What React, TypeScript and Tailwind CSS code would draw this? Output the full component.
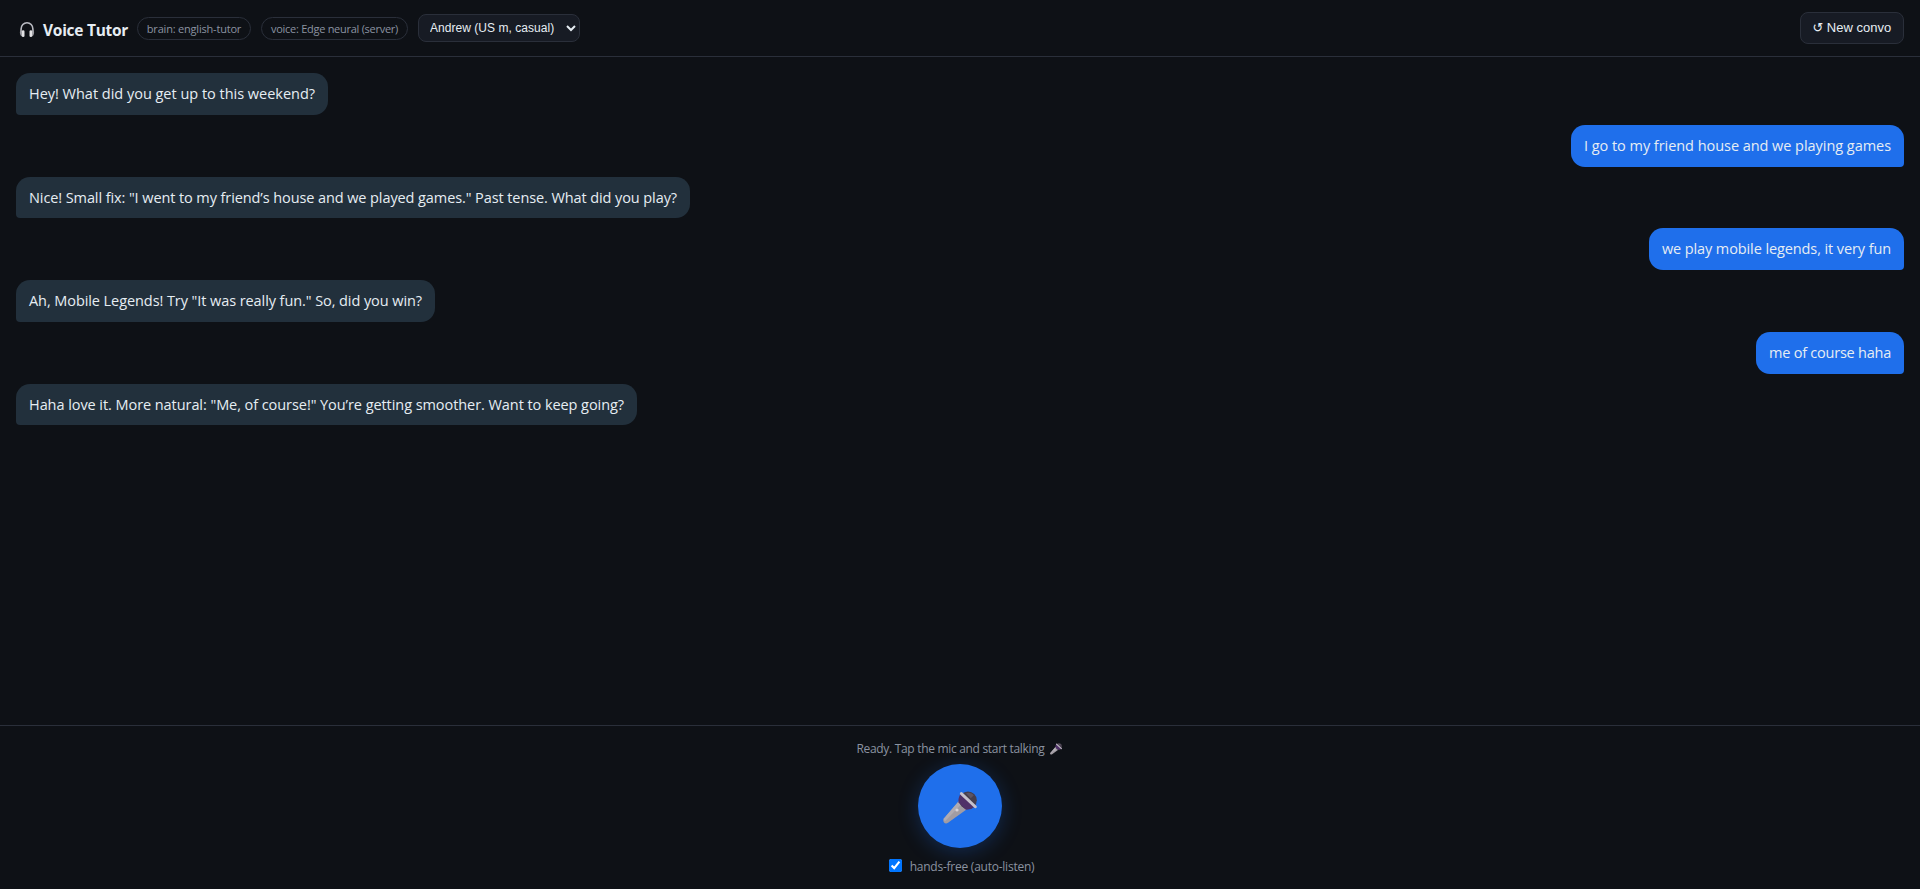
import { useState } from 'react';

interface Message {
  from: 'bot' | 'user';
  text: string;
  tracking: string;
}

const messages: Message[] = [
  { from: 'bot', text: 'Hey! What did you get up to this weekend?', tracking: 'tracking-[-0.015px]' },
  { from: 'user', text: 'I go to my friend house and we playing games', tracking: 'tracking-[-0.045px]' },
  {
    from: 'bot',
    text: 'Nice! Small fix: "I went to my friend’s house and we played games." Past tense. What did you play?',
    tracking: 'tracking-[-0.092px]',
  },
  { from: 'user', text: 'we play mobile legends, it very fun', tracking: 'tracking-[-0.1px]' },
  {
    from: 'bot',
    text: 'Ah, Mobile Legends! Try "It was really fun." So, did you win?',
    tracking: 'tracking-[-0.077px]',
  },
  { from: 'user', text: 'me of course haha', tracking: 'tracking-[-0.23px]' },
  {
    from: 'bot',
    text: 'Haha love it. More natural: "Me, of course!" You’re getting smoother. Want to keep going?',
    tracking: 'tracking-[-0.065px]',
  },
];

function HeadphonesIcon() {
  return (
    <svg viewBox="0 0 16 17" className="h-[17px] w-4 shrink-0" fill="none">
      <path d="M2.1 11V8a5.9 6.3 0 0 1 11.8 0v3" stroke="#b9bbc2" strokeWidth="1.6" />
      <path d="M2.1 8.5C1 9.3.7 11 1 12.6c.3 1.6 1 2.5 1.9 2.9V9z" fill="#9a9ba1" />
      <path d="M13.9 8.5c1.1.8 1.4 2.5 1.1 4.1-.3 1.6-1 2.5-1.9 2.9V9z" fill="#9a9ba1" />
      <rect x="2.8" y="9.2" width="2.7" height="6.8" rx="1.3" fill="#e2e2e4" />
      <rect x="10.5" y="9.2" width="2.7" height="6.8" rx="1.3" fill="#e2e2e4" />
    </svg>
  );
}

function MicIcon({ className }: { className: string }) {
  return (
    <svg viewBox="0 0 34 33" className={className}>
      {/* handle */}
      <path d="M15.5 10.5 23.5 18.5 5 31.8Q2.6 33.2 1 31.4-.3 29.6.9 27.6z" fill="#a19ca3" />
      <path d="M15.5 10.5 18.3 13.3 2 30.2.6 28.4.9 27.6z" fill="#b0abb2" />
      <circle cx="14" cy="19" r="1.6" fill="#d6d2d8" />
      {/* head */}
      <circle cx="25" cy="9.2" r="8.8" fill="#463e4d" />
      <path d="M23 2.2c3-1.3 6.2-.2 7.7 2.2l-3 2.8z" fill="#5c5463" />
      {/* collar */}
      <path d="M17.6 3 31.4 16 Q28 19 22.500 18.600L15.500 11.500Q15 6.500 17.600 3z" fill="#4f3068" />
      <path d="M18.4 2.600 32.300 15.700" stroke="#c6c1cc" strokeWidth="2.900" strokeLinecap="round" />
    </svg>
  );
}

function Bubble({ message }: { message: Message }) {
  const isUser = message.from === 'user';
  return (
    <div
      className={`max-w-[80%] whitespace-nowrap rounded-[14px] px-[13px] py-[10px] text-[14.5px] leading-[21.75px] ${message.tracking} ${
        isUser
          ? 'self-end rounded-br-[4px] bg-[#1f6feb] text-[#e6edf3]'
          : 'self-start rounded-bl-[4px] bg-[#22303c] text-[#e6edf3]'
      }`}
    >
      {message.text}
    </div>
  );
}

export default function App() {
  const [voice, setVoice] = useState('andrew');
  const [handsFree, setHandsFree] = useState(true);

  return (
    <div className="flex h-screen flex-col overflow-hidden bg-[#0e1116] font-['Open_Sans','Noto_Sans',sans-serif] text-[#e6edf3]">
      <header className="flex h-[57px] shrink-0 items-center gap-[10px] border-b border-[#2a2f3a] px-4">
        <h1 className="flex w-[111px] items-center gap-2 whitespace-nowrap pl-[3px] pt-[3px] text-[15.5px] font-bold leading-6 tracking-[-0.27px]">
          <HeadphonesIcon />
          Voice Tutor
        </h1>
        <span className="mt-px flex h-[23px] w-[114px] items-center justify-center whitespace-nowrap rounded-full border border-[#2a2f3a] pt-px text-[11px] tracking-[-0.2px] text-[#8b93a1]">
          brain: english-tutor
        </span>
        <span className="mt-px flex h-[23px] w-[147px] items-center justify-center whitespace-nowrap rounded-full border border-[#2a2f3a] pt-px text-[11px] tracking-[-0.27px] text-[#8b93a1]">
          voice: Edge neural (server)
        </span>
        <select
          value={voice}
          onChange={(e) => setVoice(e.target.value)}
          className="h-7 w-[162px] rounded-lg border border-[#2a2f3a] bg-[#171b24] px-[7px] font-['Liberation_Sans',Arial,sans-serif] text-[12px] tracking-[0.04px] text-[#e6edf3]"
        >
          <option value="andrew">Andrew (US m, casual)</option>
        </select>
        <button className="ml-auto flex h-8 w-[104px] items-center justify-center gap-1 whitespace-nowrap rounded-lg border border-[#2a2f3a] bg-[#171b24] pb-px font-['Liberation_Sans',Arial,sans-serif] text-[13px] text-[#e6edf3]">
          <span className="flex w-[10px] justify-center font-['DejaVu_Sans',sans-serif] text-[13px]">↺</span>
          New convo
        </button>
      </header>

      <main className="flex min-h-0 flex-1 flex-col gap-[10px] p-4">
        {messages.map((message) => (
          <Bubble key={message.text} message={message} />
        ))}
      </main>

      <footer className="flex h-[164px] shrink-0 flex-col items-center border-t border-[#2a2f3a] pt-[14px] text-[12px] text-[#8b93a1]">
        <p className="flex h-[18px] items-center gap-[5px] pr-[2px] leading-[18px] tracking-[-0.31px]">
          Ready. Tap the mic and start talking
          <MicIcon className="mb-px h-3 w-3" />
        </p>
        <button className="mt-[6px] flex h-[84px] w-[84px] shrink-0 items-center justify-center rounded-full bg-[#1f6feb] pt-[3px] shadow-[0_4px_20px_rgba(31,111,235,0.27)]">
          <MicIcon className="h-[33px] w-[34px]" />
        </button>
        <label className="mt-[10px] flex h-[18px] items-center gap-2 pl-[3px] leading-[18px] tracking-[-0.24px]">
          <input
            type="checkbox"
            checked={handsFree}
            onChange={(e) => setHandsFree(e.target.checked)}
            className="mb-1 h-[13px] w-[13px]"
          />
          hands-free (auto-listen)
        </label>
      </footer>
    </div>
  );
}
